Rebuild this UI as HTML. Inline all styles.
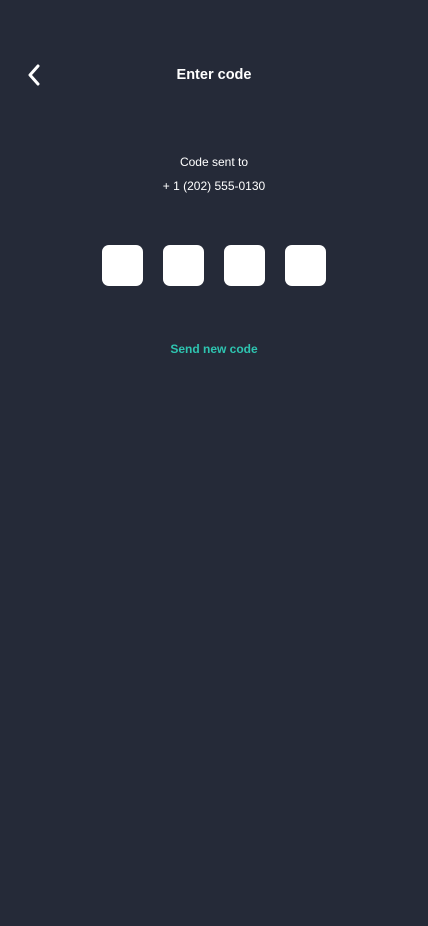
<!DOCTYPE html>
<html><head><style>
body{margin:0;width:428px;height:926px;background:#252a38;font-family:"Liberation Sans",sans-serif;color:#fff;position:relative;overflow:hidden}
.t{position:absolute;left:0;width:428px;text-align:center}
.b{position:absolute;top:245px;width:41px;height:41px;background:#fff;border-radius:7px}
</style></head><body>
<svg style="position:absolute;left:26px;top:64px" width="16" height="22" viewBox="0 0 16 22"><path d="M12 2 L4 11 L12 20" fill="none" stroke="#fff" stroke-width="3" stroke-linecap="round" stroke-linejoin="round"/></svg>
<div class="t" style="top:67px;font-size:14.5px;font-weight:bold">Enter code</div>
<div class="t" style="top:155px;font-size:12px">Code sent to</div>
<div class="t" style="top:179px;font-size:12px">+ 1 (202) 555-0130</div>
<div class="b" style="left:102px"></div>
<div class="b" style="left:163px"></div>
<div class="b" style="left:224px"></div>
<div class="b" style="left:285px"></div>
<div class="t" style="top:342px;font-size:12px;font-weight:bold;color:#2ec4b0">Send new code</div>
</body></html>
